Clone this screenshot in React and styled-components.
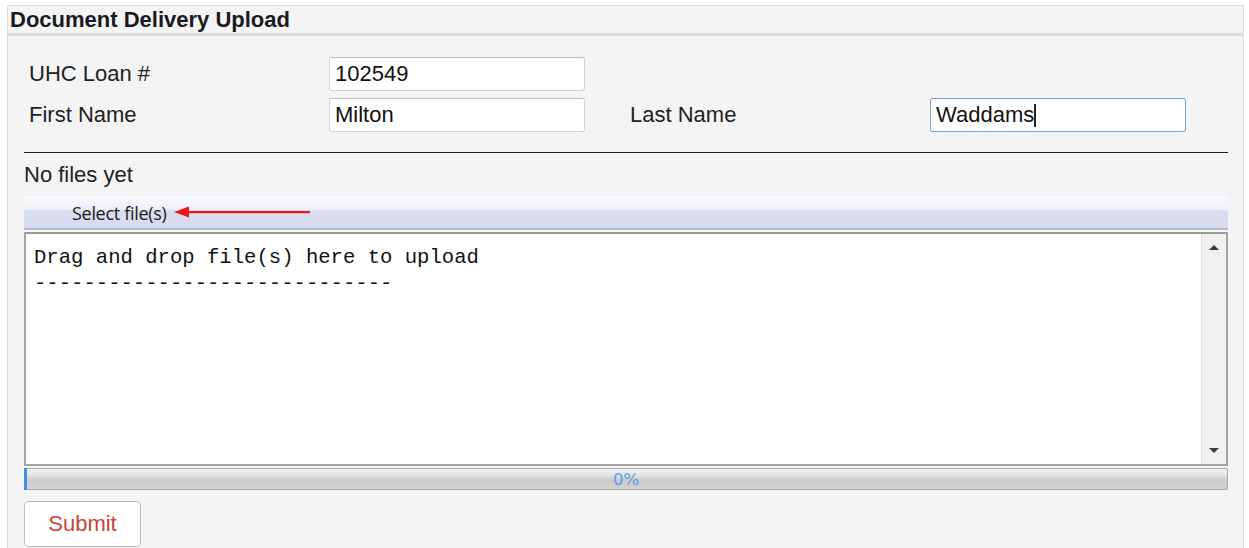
import React from "react";
import styled, { createGlobalStyle } from "styled-components";

const GlobalStyle = createGlobalStyle`
  html, body {
    margin: 0;
    padding: 0;
    background: #ffffff;
    font-family: "Liberation Sans", Arial, sans-serif;
    color: #1c1c1c;
    overflow: hidden;
  }
`;

const Panel = styled.section`
  margin: 5px 5px 0 7px;
  border: 1px solid #dedede;
  border-bottom: none;
  background: #f4f4f4;
  height: calc(100vh - 5px);
  box-sizing: border-box;
  overflow: hidden;
`;

const TitleBar = styled.h1`
  margin: 0;
  height: 27px;
  padding-left: 2px;
  font-size: 22px;
  line-height: 28px;
  font-weight: bold;
  color: #1a1a22;
  border-bottom: 3px solid #dcdcdc;
`;

const Body = styled.div`
  padding: 0 15px 0 16px;
  display: flex;
  flex-direction: column;
`;

const FormGrid = styled.div`
  margin-top: 21px;
  padding-left: 5px;
  display: grid;
  grid-template-columns: 300px 256px 45px 300px 256px;
  grid-auto-rows: 34px;
  row-gap: 7px;
  align-items: center;
`;

const Label = styled.label`
  font-size: 22px;
  color: #222;
  grid-column: ${(p) => p.$col};
`;

const FieldWrap = styled.div`
  position: relative;
  grid-column: ${(p) => p.$col};
  height: 34px;
`;

const TextInput = styled.input`
  box-sizing: border-box;
  width: 100%;
  height: 34px;
  padding: 0 5px;
  font-family: "Liberation Sans", Arial, sans-serif;
  font-size: 22px;
  color: #111;
  background: #fff;
  border: 1px solid ${(p) => (p.$focused ? "#7da7d9" : "#cfd0d4")};
  border-top-color: ${(p) => (p.$focused ? "#6a98cf" : "#bcbdc2")};
  border-radius: 3px;
  outline: none;
`;

const Caret = styled.span`
  position: absolute;
  top: 6px;
  left: ${(p) => p.$left}px;
  width: 2px;
  height: 23px;
  background: #222;
`;

const Rule = styled.hr`
  margin: 20px 0 0 0;
  border: none;
  border-top: 1px solid #1e1e1e;
  height: 0;
`;

const Status = styled.div`
  margin-top: 9px;
  font-size: 22px;
  line-height: 26px;
  color: #222;
`;

const SelectBar = styled.div`
  margin-top: 8px;
  height: 32px;
  display: flex;
  align-items: center;
  padding-left: 48px;
  background: linear-gradient(#f9fafd 0%, #eef0f8 40%, #d9deef 48%, #d5dbee 100%);
  border-bottom: 2px solid #b7bac4;
`;

const SelectLabel = styled.span`
  font-family: "Open Sans", "Noto Sans", sans-serif;
  font-size: 18px;
  letter-spacing: -0.3px;
  color: #1b1b1b;
  margin-top: 1px;
`;

const Arrow = styled.svg`
  margin-left: 7px;
  display: block;
`;

const DropZone = styled.div`
  margin-top: 2px;
  height: 234px;
  box-sizing: border-box;
  border: 2px solid #a3a3a3;
  border-top-color: #9a9a9a;
  background: #fff;
  display: flex;
`;

const DropText = styled.pre`
  flex: 1;
  margin: 0;
  padding: 11px 8px 0 8px;
  font-family: "Liberation Mono", "Courier New", monospace;
  font-size: 20.6px;
  line-height: 26px;
  color: #111;
`;

const ScrollTrack = styled.div`
  width: 24px;
  background: #f0f0f0;
  border-left: 1px solid #e2e2e2;
  display: flex;
  flex-direction: column;
  justify-content: space-between;
  align-items: center;
  padding: 11px 0 11px 0;
`;

const Tri = styled.span`
  width: 0;
  height: 0;
  border-left: 5px solid transparent;
  border-right: 5px solid transparent;
  ${(p) =>
    p.$up
      ? "border-bottom: 5px solid #3a3a3a;"
      : "border-top: 5px solid #3a3a3a;"}
`;

const Progress = styled.div`
  position: relative;
  margin-top: 2px;
  height: 22px;
  box-sizing: border-box;
  border: 1px solid #ababab;
  border-radius: 2px;
  background: linear-gradient(#f1f1f1 0%, #e4e4e4 30%, #cbcbcb 55%, #d2d2d2 100%);
  display: flex;
  align-items: center;
  justify-content: center;
`;

const ProgressFill = styled.div`
  position: absolute;
  left: -1px;
  top: -1px;
  bottom: -1px;
  background: #3b8fe6;
`;

const ProgressText = styled.span`
  font-family: "DejaVu Sans", Verdana, sans-serif;
  font-size: 16.5px;
  color: #5c9fe4;
`;

const SubmitButton = styled.button`
  margin-top: 11px;
  width: 117px;
  height: 46px;
  align-self: flex-start;
  background: #fff;
  border: 1px solid #b9b9b9;
  border-radius: 5px;
  font-family: "Liberation Sans", Arial, sans-serif;
  font-size: 22px;
  color: #c9423a;
  padding: 0;
  cursor: pointer;
`;

export default function App() {
  const pct = 0;
  return (
    <>
      <GlobalStyle />
      <Panel>
        <TitleBar>Document Delivery Upload</TitleBar>
        <Body>
          <FormGrid>
            <Label $col="1">UHC Loan #</Label>
            <FieldWrap $col="2">
              <TextInput defaultValue="102549" />
            </FieldWrap>

            <Label $col="1">First Name</Label>
            <FieldWrap $col="2">
              <TextInput defaultValue="Milton" />
            </FieldWrap>
            <Label $col="4">Last Name</Label>
            <FieldWrap $col="5">
              <TextInput defaultValue="Waddams" $focused />
              <Caret $left={104} />
            </FieldWrap>
          </FormGrid>

          <Rule />
          <Status>No files yet</Status>

          <SelectBar>
            <SelectLabel>Select file(s)</SelectLabel>
            <Arrow width="136" height="12" viewBox="0 0 136 12">
              <polygon points="0,6 15,0.5 15,11.5" fill="#e8161c" />
              <rect x="13" y="5" width="123" height="2.2" fill="#e8161c" />
            </Arrow>
          </SelectBar>

          <DropZone>
            <DropText>
              {"Drag and drop file(s) here to upload\n-----------------------------"}
            </DropText>
            <ScrollTrack>
              <Tri $up />
              <Tri />
            </ScrollTrack>
          </DropZone>

          <Progress>
            <ProgressFill style={{ width: `calc(${pct}% + 3px)` }} />
            <ProgressText>{pct}%</ProgressText>
          </Progress>

          <SubmitButton>Submit</SubmitButton>
        </Body>
      </Panel>
    </>
  );
}
